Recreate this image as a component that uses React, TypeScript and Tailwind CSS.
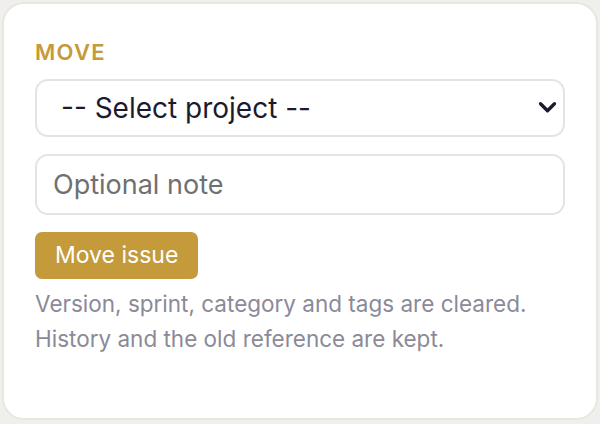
import { useState } from 'react';

function Chevron() {
  return (
    <svg viewBox="0 0 20 14" className="w-[19px] h-[13px]" fill="none">
      <path d="M2.5 3 L10 10.5 L17.5 3" stroke="#1c1b2e" strokeWidth="3.6" strokeLinecap="round" strokeLinejoin="round" />
    </svg>
  );
}

export default function App() {
  const [project, setProject] = useState('');
  const [note, setNote] = useState('');

  return (
    <div className="w-[600px] h-[424px] bg-[#f0efeb] p-[2px] font-['Inter',sans-serif]">
      <div className="h-[418px] bg-white border-2 border-[#e8e6e0] rounded-[22px] px-[31px] pt-[33px] flex flex-col">
        {/* Section label */}
        <h3 className="text-[22px] leading-[30px] font-semibold tracking-[0.06em] text-[#c49a3a]">MOVE</h3>

        {/* Project select */}
        <div className="relative mt-[12px]">
          <select
            value={project}
            onChange={e => setProject(e.target.value)}
            className="appearance-none w-full h-[58px] rounded-[13px] border-2 border-[#e6e4df] bg-white pl-[24px] pr-12 text-[28px] text-[#1c1b2e] outline-none"
          >
            <option value="">-- Select project --</option>
          </select>
          <div className="absolute right-[8px] top-[22px] pointer-events-none">
            <Chevron />
          </div>
        </div>

        {/* Note */}
        <input
          value={note}
          onChange={e => setNote(e.target.value)}
          placeholder="Optional note"
          className="mt-[17px] h-[61px] w-full rounded-[13px] border-2 border-[#e6e4df] bg-white px-[16px] text-[27px] text-[#1c1b2e] placeholder:text-[#707070] outline-none"
        />

        <div>
          <button className="mt-[17px] h-[47px] px-[20px] rounded-[7px] bg-[#c49a3a] text-white text-[23px]">
            Move issue
          </button>
        </div>

        <p className="mt-[7px] text-[22.5px] leading-[35px] text-[#8a8a98]">
          Version, sprint, category and tags are cleared.
          <br />
          History and the old reference are kept.
        </p>
      </div>
    </div>
  );
}
